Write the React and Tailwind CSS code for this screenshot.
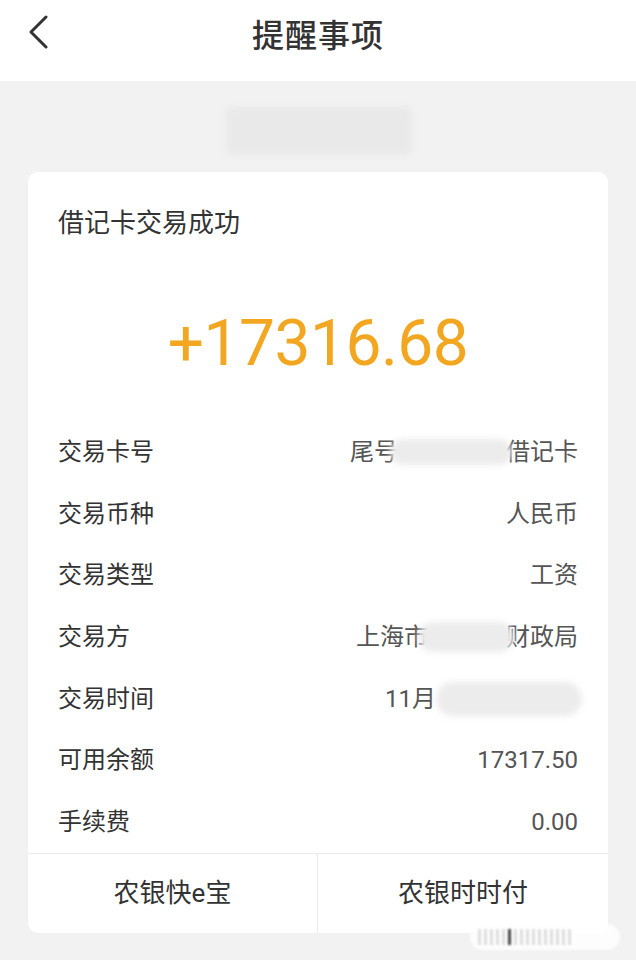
import React from 'react';

const rows = [
  { label: '交易卡号', value: 'card' },
  { label: '交易币种', value: '人民币' },
  { label: '交易类型', value: '工资' },
  { label: '交易方', value: 'party' },
  { label: '交易时间', value: 'time' },
  { label: '可用余额', value: '17317.50' },
  { label: '手续费', value: '0.00' },
];

function Smudge({ className }) {
  return <span className={`relative z-10 inline-block rounded-full bg-[#ececec] blur-[3px] align-middle ${className}`} />;
}

function Value({ value }) {
  if (value === 'card') {
    return (
      <span className="flex items-center">
        <span>尾号</span>
        <Smudge className="-ml-[8px] -mr-[6px] h-[26px] w-[122px]" />
        <span>借记卡</span>
      </span>
    );
  }
  if (value === 'party') {
    return (
      <span className="flex items-center">
        <span>上海市</span>
        <Smudge className="-ml-[10px] -mr-[8px] h-[30px] w-[96px]" />
        <span>财政局</span>
      </span>
    );
  }
  if (value === 'time') {
    return (
      <span className="flex items-center">
        <span>11月</span>
        <Smudge className="h-[34px] w-[146px] -mr-[4px]" />
      </span>
    );
  }
  return <span>{value}</span>;
}

export default function App() {
  return (
    <div className="relative min-h-[960px] bg-[#f2f2f2] font-['Roboto','Noto_Sans_CJK_SC',sans-serif]">
      <div className="relative flex h-[81px] items-center justify-center bg-white">
        <svg className="absolute left-[24px] top-[15px]" width="28" height="34" viewBox="0 0 28 34" fill="none">
          <path d="M22 2 L7 17 L22 32" stroke="#333" strokeWidth="3" strokeLinecap="round" strokeLinejoin="round" />
        </svg>
        <span className="-mt-[10px] text-[32px] font-medium text-[#333] leading-none tracking-[1px]">提醒事项</span>
      </div>

      <div className="flex justify-center pt-[26px]">
        <div className="ml-[2px] h-[48px] w-[186px] rounded-[6px] bg-[#e9e9e9] blur-[3px]" />
      </div>

      <div className="mx-[28px] mt-[17px] rounded-[10px] bg-white">
        <div className="px-[30px] pt-[33px] text-[26px] leading-[36px] text-[#333]">借记卡交易成功</div>

        <div className="mt-[68px] text-center text-[64px] leading-[70px] tracking-[-0.5px] text-[#f3a61f]">
          +17316.68
        </div>

        <div className="mt-[42px]">
          {rows.map((r) => (
            <div key={r.label} className="flex h-[61.7px] items-center justify-between px-[30px] text-[24px]">
              <span className="text-[#333]">{r.label}</span>
              <span className="text-[#555]"><Value value={r.value} /></span>
            </div>
          ))}
        </div>

        <div className="grid grid-cols-[290px_1fr] border-t border-[#ececec]">
          <div className="flex h-[79px] items-center justify-center border-r border-[#ececec] text-[26px] text-[#333]">
            农银快e宝
          </div>
          <div className="flex h-[79px] items-center justify-center text-[26px] text-[#333]">
            农银时时付
          </div>
        </div>
      </div>

      <div className="absolute left-[470px] top-[924px] flex h-[26px] w-[150px] items-center gap-[3px] rounded-full bg-white/80 px-[8px] blur-[1px]">
        {Array.from({ length: 16 }).map((_, i) => (
          <span key={i} className={`h-[16px] w-[3px] ${i === 5 ? 'bg-[#444]' : 'bg-[#ddd]'}`} />
        ))}
      </div>
    </div>
  );
}
